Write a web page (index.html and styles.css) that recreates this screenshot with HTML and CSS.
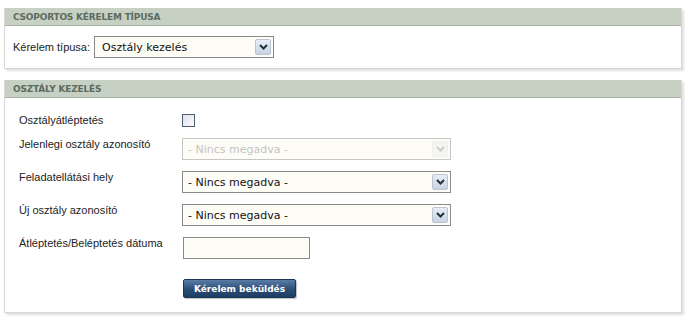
FILE: index.html
```
<!DOCTYPE html>
<html lang="hu">
<head>
    <meta charset="UTF-8">
    <title>Kérelem</title>
    <link rel="stylesheet" href="styles.css">
</head>
<body>
    <div class="panel">
        <div class="panel-head">Csoportos kérelem típusa</div>
        <div class="panel-body type-row">
            <label for="tipus">Kérelem típusa:</label>
            <div class="select-wrap big">
                <select id="tipus">
                    <option>Osztály kezelés</option>
                </select>
                <span class="arrow"><svg width="9" height="6" viewBox="0 0 9 6"><path d="M1 1l3.5 3.5L8 1" fill="none" stroke="#233" stroke-width="2"/></svg></span>
            </div>
        </div>
    </div>

    <div class="panel">
        <div class="panel-head">Osztály kezelés</div>
        <div class="panel-body form">
            <div class="row check-row">
                <label>Osztályátléptetés</label>
                <span class="checkbox"></span>
            </div>
            <div class="row">
                <label>Jelenlegi osztály azonosító</label>
                <div class="select-wrap wide disabled">
                    <select disabled>
                        <option>- Nincs megadva -</option>
                    </select>
                    <span class="arrow"><svg width="9" height="6" viewBox="0 0 9 6"><path d="M1 1l3.5 3.5L8 1" fill="none" stroke="#ccc" stroke-width="2"/></svg></span>
                </div>
            </div>
            <div class="row">
                <label>Feladatellátási hely</label>
                <div class="select-wrap wide">
                    <select>
                        <option>- Nincs megadva -</option>
                    </select>
                    <span class="arrow"><svg width="9" height="6" viewBox="0 0 9 6"><path d="M1 1l3.5 3.5L8 1" fill="none" stroke="#233" stroke-width="2"/></svg></span>
                </div>
            </div>
            <div class="row">
                <label>Új osztály azonosító</label>
                <div class="select-wrap wide">
                    <select>
                        <option>- Nincs megadva -</option>
                    </select>
                    <span class="arrow"><svg width="9" height="6" viewBox="0 0 9 6"><path d="M1 1l3.5 3.5L8 1" fill="none" stroke="#233" stroke-width="2"/></svg></span>
                </div>
            </div>
            <div class="row">
                <label>Átléptetés/Beléptetés dátuma</label>
                <input type="text" class="date">
            </div>
            <div class="row submit-row">
                <span></span>
                <button>Kérelem beküldés</button>
            </div>
        </div>
    </div>
</body>
</html>
```

FILE: styles.css
```
* {
    margin: 0;
    padding: 0;
    box-sizing: border-box;
}

body {
    font-family: 'Liberation Sans', Arial, sans-serif;
    font-size: 11px;
    color: #222;
    background-color: #fff;
    padding: 8px 5px 0 4px;
}

.panel {
    border: 1px solid #d6d6d6;
    border-top: none;
    box-shadow: 2px 2px 2px rgba(0, 0, 0, 0.12);
    margin-bottom: 11px;
    background-color: #fff;
}

.panel-head {
    background-color: #c6d0c3;
    border-bottom: 1px solid #a9b4a7;
    height: 18px;
    line-height: 18px;
    padding-left: 8px;
    font-family: 'DejaVu Sans', Verdana, sans-serif;
    font-size: 9px;
    font-weight: bold;
    text-transform: uppercase;
    color: #5d6b5f;
    letter-spacing: -0.2px;
}

.panel-body {
    background-color: #fff;
}

.type-row {
    display: flex;
    align-items: center;
    gap: 4px;
    padding: 10px 8px 10px 8px;
}

.select-wrap {
    position: relative;
    height: 22px;
}

.select-wrap select {
    appearance: none;
    -webkit-appearance: none;
    width: 100%;
    height: 100%;
    border: 1px solid #8a8a8a;
    background-color: #fdfcf5;
    font-family: 'DejaVu Sans', Verdana, sans-serif;
    font-size: 11px;
    color: #111;
    padding-left: 5px;
    outline: none;
}

.select-wrap.big {
    width: 180px;
}

.select-wrap.big select {
    font-size: 11px;
    padding-left: 7px;
}

.select-wrap.wide {
    width: 269px;
}

.arrow {
    position: absolute;
    right: 3px;
    top: 3px;
    width: 16px;
    height: 16px;
    border: 1px solid #b9c3d3;
    border-radius: 2px;
    background: linear-gradient(#e8edf6, #c9d3e4);
    display: flex;
    align-items: center;
    justify-content: center;
    pointer-events: none;
}

.disabled select {
    color: #aaa;
    border-color: #b0b0b0;
}

.disabled .arrow {
    border-color: #eee;
    background: #f4f4f0;
}

.form {
    display: flex;
    flex-direction: column;
    gap: 11px;
    padding: 16px 14px 14px 14px;
}

.row {
    display: grid;
    grid-template-columns: 163px auto;
    align-items: start;
}

.row label {
    line-height: 13px;
}

.check-row {
    align-items: center;
}

.checkbox {
    width: 13px;
    height: 13px;
    border: 1px solid #4f5f6f;
    background: linear-gradient(135deg, #dde3ea, #fafbfc);
}

.date {
    width: 127px;
    height: 22px;
    border: 1px solid #8a8a8a;
    background-color: #fdfcf5;
    outline: none;
    margin-left: 1px;
}

.submit-row {
    margin-top: 9px;
}

.submit-row button {
    width: 113px;
    height: 19px;
    margin-left: 1px;
    border: 1px solid #1c3656;
    border-radius: 2px;
    background: linear-gradient(#5a7da6, #2b4d78 55%, #1f3d63);
    color: #fff;
    font-family: 'DejaVu Sans', Verdana, sans-serif;
    font-size: 9px;
    font-weight: bold;
    box-shadow: 1px 1px 1px rgba(0, 0, 0, 0.25);
}
```
